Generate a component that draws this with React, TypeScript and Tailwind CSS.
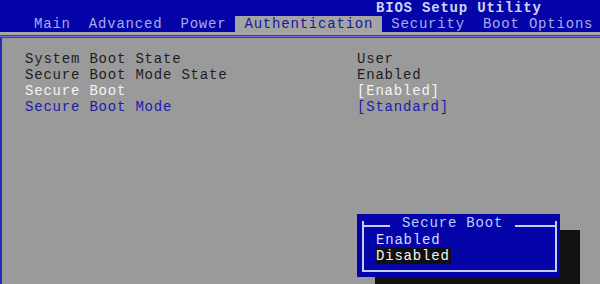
import React from "react";

const font = { fontFamily: '"Liberation Mono", "DejaVu Sans Mono", monospace' };

function Tab({ label, active }: { label: string; active?: boolean }) {
  return (
    <div
      className={
        active
          ? "shrink-0 whitespace-nowrap px-[9px] h-[16px] leading-[16px] bg-[#a4a4a4] text-[#1818a0]"
          : "shrink-0 whitespace-nowrap px-[9px] h-[16px] leading-[16px] text-[#a8acec]"
      }
    >
      {label}
    </div>
  );
}

function Row({ label, value, tone }: { label: string; value: string; tone: "dark" | "white" | "blue" }) {
  const c =
    tone === "dark" ? "text-[#1e1e1e]" : tone === "white" ? "text-[#f4f4f4]" : "text-[#1c1ca8]";
  return (
    <div className={"flex h-[16px] leading-[16px] " + c}>
      <div className="w-[332px]">{label}</div>
      <div>{value}</div>
    </div>
  );
}

export default function App() {
  return (
    <div
      className="relative w-[600px] h-[284px] overflow-hidden bg-[#9a9a9a] text-[14px] tracking-[0.8px] flex flex-col"
      style={font}
    >
      <div className="h-[32px] bg-[#0404a8] flex flex-col">
        <div className="h-[16px] leading-[16px] pl-[376px] text-[#d0d4f4] font-bold whitespace-nowrap">BIOS Setup Utility</div>
        <div className="flex pl-[25px] whitespace-nowrap">
          <Tab label="Main" />
          <Tab label="Advanced" />
          <Tab label="Power" />
          <Tab label="Authentication" active />
          <Tab label="Security" />
          <Tab label="Boot Options" />
        </div>
      </div>
      <div className="h-[3px] bg-[#a6a6a6]" />
      <div className="h-[3px] bg-[#7070e0] border-y border-[#3a3ac0]" />
      <div className="flex-1 border-l-[2px] border-[#2828b8] pl-[23px] pt-[13px]">
        <Row label="System Boot State" value="User" tone="dark" />
        <Row label="Secure Boot Mode State" value="Enabled" tone="dark" />
        <Row label="Secure Boot" value="[Enabled]" tone="white" />
        <Row label="Secure Boot Mode" value="[Standard]" tone="blue" />
      </div>

      {/* popup shadow */}
      <div className="absolute left-[375px] top-[230px] w-[205px] h-[60px] bg-[#121212]" />
      {/* popup */}
      <div className="absolute left-[357px] top-[214px] w-[203px] h-[63px] bg-[#0404a8] pl-[5px] pr-[3px] pt-[7px] pb-[5px]">
        <div className="relative h-full border-[2px] border-t-0 border-[#c8ccf4]">
          <div className="absolute -top-[1px] -left-[2px] -right-[2px] flex items-center">
            <div className="h-[2px] w-[28px] bg-[#c8ccf4]" />
            <div className="flex-1 text-center text-[#b8d0ff] leading-[16px] -mt-[5px]">Secure Boot</div>
            <div className="h-[2px] w-[42px] bg-[#c8ccf4]" />
          </div>
          <div className="pt-[11px] pl-[12px]">
            <div className="h-[16px] leading-[16px] text-[#d8dcff]">Enabled</div>
            <div className="h-[16px] leading-[16px] text-[#f4f4f4] bg-[#101010] w-fit pr-[1px]">Disabled</div>
          </div>
        </div>
      </div>
    </div>
  );
}
